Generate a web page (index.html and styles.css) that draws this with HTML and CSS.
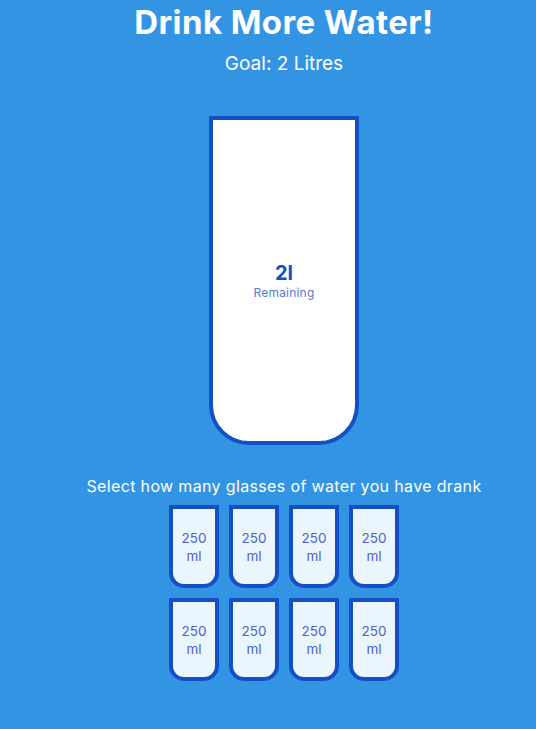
FILE: index.html
```html
<!DOCTYPE html>
<html lang="en">

<head>
    <meta charset="UTF-8">
    <meta name="viewport" content="width=device-width, initial-scale=1.0">
    <title>Drink Water</title>
    <link rel="stylesheet" href="styles.css">
</head>

<body>
    <h1>Drink More Water!</h1>
    <h3>Goal: 2 Litres</h3>

    <div class="cup">
        <div class="remained" id="remained">
            <span id="liters">2l</span>
            <small>Remaining</small>
        </div>
        <div class="percentage" id="percentage"></div>
    </div>

    <p class="text">Select how many glasses of water you have drank</p>

    <div class="cups">
        <div class="cup cup-small">250 ml</div>
        <div class="cup cup-small">250 ml</div>
        <div class="cup cup-small">250 ml</div>
        <div class="cup cup-small">250 ml</div>
        <div class="cup cup-small">250 ml</div>
        <div class="cup cup-small">250 ml</div>
        <div class="cup cup-small">250 ml</div>
        <div class="cup cup-small">250 ml</div>
    </div>
</body>

</html>
```

FILE: styles.css
```css
* {
    box-sizing: border-box;
}

body {
    background-color: #3494e4;
    color: #fff;
    font-family: Inter, "Open Sans", sans-serif;
    display: flex;
    flex-direction: column;
    align-items: center;
    margin: 0;
    padding: 0 0 40px 32px;
}

h1 {
    font-size: 33px;
    font-weight: 700;
    letter-spacing: 0.4px;
    margin: 2px 0 0;
}

h3 {
    font-size: 19px;
    font-weight: 400;
    margin: 10px 0 0;
}

.cup {
    background-color: #fff;
    border: 4px solid #144fc6;
    color: #144fc6;
    border-radius: 0 0 40px 40px;
    height: 329px;
    width: 150px;
    margin: 41px 0 30px;
    display: flex;
    flex-direction: column;
    overflow: hidden;
}

.remained {
    flex: 1;
    display: flex;
    flex-direction: column;
    align-items: center;
    justify-content: center;
    text-align: center;
}

#liters {
    font-size: 20px;
    font-weight: 700;
    line-height: 24px;
}

.remained small {
    font-size: 12px;
    letter-spacing: 0.2px;
    color: #5a78d6;
}

.text {
    font-size: 16px;
    letter-spacing: 0.35px;
    margin: 0;
    line-height: 22px;
}

.cups {
    display: flex;
    flex-wrap: wrap;
    justify-content: center;
    width: 240px;
    margin-top: 3px;
}

.cup.cup-small {
    background-color: rgba(255, 255, 255, 0.9);
    color: #4a62cf;
    height: 83px;
    width: 50px;
    border-radius: 0 0 15px 15px;
    margin: 5px;
    font-size: 13.5px;
    line-height: 18px;
    align-items: center;
    justify-content: center;
    text-align: center;
    padding: 0 6px;
    cursor: pointer;
}
```
